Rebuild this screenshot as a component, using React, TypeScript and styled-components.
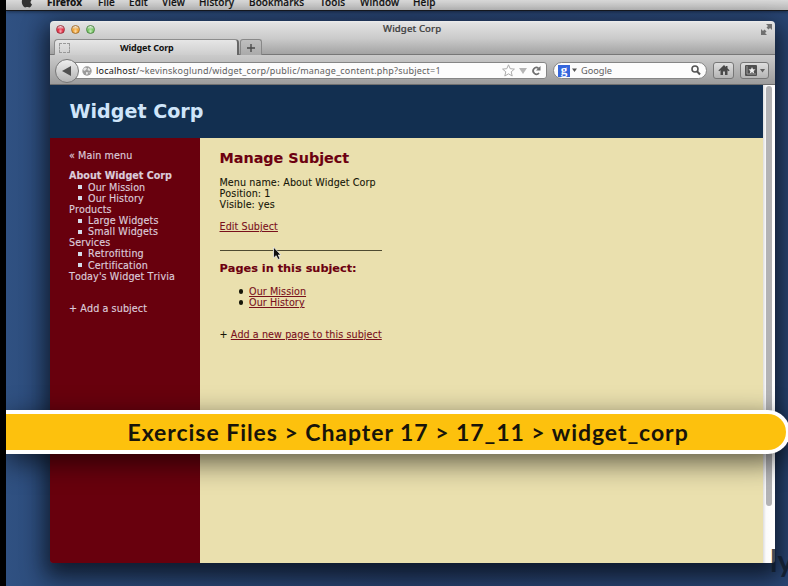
import React from "react";
import styled, { createGlobalStyle } from "styled-components";

const Global = createGlobalStyle`
  * { box-sizing: border-box; }
  html, body { margin: 0; padding: 0; overflow: hidden; background: #000; }
`;

const verdana = `"DejaVu Sans", Verdana, sans-serif`;
const lucida = `"Noto Sans", "Open Sans", sans-serif`;

const Screen = styled.div`
  position: relative;
  width: 788px;
  height: 586px;
  padding-left: 6px;
  overflow: hidden;
  background: #000;
`;

const Desktop = styled.div`
  width: 782px;
  height: 586px;
  overflow: hidden;
  background: linear-gradient(90deg, #305182 0, #2c4c7b 40px, #27416d 400px, #294674 100%);
`;

const MenuBar = styled.div`
  display: flex;
  height: 11px;
  padding-left: 14px;
  overflow: hidden;
  background: linear-gradient(#d9d9d9, #b9b9b9);
  border-bottom: 1px solid #16191f;
  box-shadow: 0 1px 3px rgba(0, 0, 0, 0.4);
`;

const AppleIcon = styled.svg`
  width: 14px;
  height: 8px;
  margin-right: 13px;
  flex: none;
`;

const MenuItem = styled.span<{ $w: number; $bold?: boolean }>`
  flex: none;
  width: ${(p) => p.$w}px;
  margin-top: -6px;
  font: ${(p) => (p.$bold ? 700 : 500)} 10px/16px ${lucida};
  letter-spacing: 0.1px;
  color: #111;
  -webkit-text-stroke: 0.2px #111;
  white-space: nowrap;
`;

const BrowserWindow = styled.div`
  width: 725px;
  height: 542px;
  margin: 10px 0 0 44px;
  overflow: hidden;
  border-radius: 4px 4px 3px 3px;
  box-shadow: 0 9px 22px 5px rgba(5, 10, 18, 0.72);
`;

const TitleBar = styled.div`
  display: grid;
  grid-template-columns: 1fr 58px 1fr;
  align-items: center;
  height: 18px;
  padding: 0 3px 2px 6px;
  background: linear-gradient(#ededed, #e2e2e2 2px, #cacaca);
`;

const Lights = styled.div`
  display: flex;
  gap: 6px;
`;

const Light = styled.span<{ $c: string; $edge: string }>`
  width: 9px;
  height: 9px;
  border-radius: 50%;
  border: 1px solid ${(p) => p.$edge};
  background: radial-gradient(ellipse at 50% 75%, #fff9 0, transparent 45%),
    linear-gradient(#fff8, ${(p) => p.$c} 50%);
`;

const WindowTitle = styled.span`
  margin-left: -2px;
  font: 500 9.6px/16px ${lucida};
  letter-spacing: 0.1px;
  color: #404040;
  -webkit-text-stroke: 0.2px #404040;
  white-space: nowrap;
`;

const ExpandIcon = styled.svg`
  width: 11px;
  height: 11px;
  justify-self: end;
`;

const TabStrip = styled.div`
  display: flex;
  height: 16px;
  padding-left: 4px;
  background: linear-gradient(#c9c9c9, #a3a3a3);
  border-bottom: 1px solid #777;
`;

const Tab = styled.div`
  display: flex;
  align-items: center;
  width: 185px;
  height: 16px;
  padding-left: 4px;
  border: 1px solid #8d8d8d;
  border-width: 1px 2px 0 1px;
  border-right-color: #666;
  border-radius: 4px 4px 0 0;
  background: linear-gradient(#e6e6e6, #cecece);
`;

const Placeholder = styled.span`
  width: 11px;
  height: 10px;
  border: 1px dashed #999;
`;

const TabLabel = styled.span`
  margin-left: 50px;
  font: 700 9px/14px ${lucida};
  letter-spacing: -0.17px;
  color: #111;
`;

const NewTab = styled.div`
  display: grid;
  place-items: center;
  width: 22px;
  height: 16px;
  margin-left: 1px;
  border: 1px solid #888;
  border-bottom: 0;
  border-radius: 3px 3px 0 0;
  background: linear-gradient(#bfbfbf, #aaa);
`;

const NavBar = styled.div`
  display: flex;
  align-items: center;
  height: 30px;
  padding: 2px 7px 0 5px;
  background: linear-gradient(#cbcbcb, #9c9c9c);
  border-bottom: 1px solid #6f6f6f;
`;

const BackButton = styled.div`
  z-index: 1;
  display: grid;
  place-items: center;
  flex: none;
  width: 24px;
  height: 24px;
  border: 1px solid #777;
  border-radius: 50%;
  background: linear-gradient(#eee, #b4b4b4);
`;

const UrlField = styled.div`
  display: flex;
  align-items: center;
  flex: none;
  width: 473px;
  height: 17px;
  margin-left: -5px;
  padding: 0 4px 0 7px;
  border: 1px solid #858585;
  border-radius: 0 3px 3px 0;
  background: #fcfcfc;
`;

const UrlText = styled.span`
  flex: 1;
  margin-left: 4px;
  font: 400 9px/14px ${lucida};
  letter-spacing: 0.205px;
  color: #606060;
  white-space: nowrap;
`;

const Host = styled.span`
  color: #111;
`;

const UrlIcons = styled.svg`
  width: 40px;
  height: 13px;
`;

const SearchField = styled.div`
  display: flex;
  align-items: center;
  flex: none;
  width: 154px;
  height: 17px;
  margin-left: 6px;
  padding: 0 5px 0 4px;
  border: 1px solid #858585;
  border-radius: 9px;
  background: #fcfcfc;
`;

const GoogleBadge = styled.span`
  width: 12px;
  height: 12px;
  background: #3566dc;
  color: #fff;
  font: 700 13px/9px "Liberation Serif", serif;
  text-align: center;
`;

const SearchText = styled.span`
  flex: 1;
  margin-left: 2px;
  font: 400 9.2px/14px ${lucida};
  color: #606060;
`;

const ToolButton = styled.div<{ $w: number }>`
  display: grid;
  place-items: center;
  flex: none;
  width: ${(p) => p.$w}px;
  height: 17px;
  margin-left: 6px;
  border: 1px solid #777;
  border-radius: 3px;
  background: linear-gradient(#dedede, #b4b4b4);
`;

const Viewport = styled.div`
  display: flex;
  height: 478px;
`;

const Page = styled.div`
  display: grid;
  grid-template: 53px 1fr / 150px 1fr;
  width: 713px;
  font-family: ${verdana};
  font-kerning: none;
`;

const PageHeader = styled.header`
  grid-column: 1 / -1;
  padding-left: 19.5px;
  background: #122f50;
  color: #cfe5fa;
  font-size: 19.1px;
  font-weight: 700;
  line-height: 53px;
`;

const Sidebar = styled.nav`
  padding: 12px 0 0 19px;
  background: #68000d;
  color: #dccbd9;
  font-size: 9.6px;
  line-height: 11.15px;
  letter-spacing: 0.1px;
  white-space: nowrap;
  -webkit-text-stroke: 0.15px #dccbd9;
`;

const NavLine = styled.div<{ $gap?: number; $bold?: boolean }>`
  height: 11.15px;
  margin-top: ${(p) => p.$gap ?? 0}px;
  font-weight: ${(p) => (p.$bold ? 700 : 400)};
  letter-spacing: ${(p) => (p.$bold ? 0 : 0.1)}px;
`;

const SubLine = styled.div`
  display: flex;
  align-items: center;
  gap: 6px;
  height: 11.15px;
  padding-left: 9px;

  &::before {
    content: "";
    width: 4px;
    height: 4px;
    background: #d5dcea;
  }
`;

const Main = styled.main`
  padding: 11px 0 0 19.5px;
  background: #eae0ae;
  color: #161608;
  font-size: 9.6px;
  line-height: 11.15px;
  letter-spacing: 0.08px;
  white-space: nowrap;
  -webkit-text-stroke: 0.1px;
`;

const Title = styled.h2`
  height: 18px;
  margin: 0;
  font-size: 14.35px;
  line-height: 18px;
  letter-spacing: 0;
  color: #6c0010;
`;

const Details = styled.div`
  margin-top: 10px;
`;

const Link = styled.a`
  color: #79101c;
  text-decoration: underline;
  text-decoration-thickness: 1px;
  text-underline-offset: 1px;
`;

const Action = styled.div<{ $gap: number }>`
  height: 11px;
  margin-top: ${(p) => p.$gap}px;
`;

const Rule = styled.hr`
  width: 162px;
  height: 1px;
  margin: 18px 0 0;
  border: 0;
  background: #4f4b31;
`;

const Subtitle = styled.h3`
  height: 14px;
  margin: 11px 0 0;
  font-size: 11.3px;
  line-height: 14px;
  letter-spacing: 0;
  color: #6c0010;
`;

const PageList = styled.ul`
  margin: 9.5px 0 0;
  padding: 0;
  list-style: none;
`;

const PageItem = styled.li`
  display: flex;
  align-items: center;
  gap: 6px;
  height: 11.15px;
  padding-left: 19px;

  &::before {
    content: "";
    width: 4.5px;
    height: 4.5px;
    border-radius: 50%;
    background: #161608;
  }
`;

const ScrollTrack = styled.div`
  width: 12px;
  padding: 1px 3px 0;
  background: linear-gradient(90deg, #ddd, #fbfbfb 3px, #fff);
`;

const ScrollThumb = styled.div`
  width: 6px;
  height: 420px;
  border-radius: 4px;
  background: #b3b3b5;
`;

const Banner = styled.div`
  position: absolute;
  left: 6px;
  top: 410px;
  width: 784px;
  height: 44px;
  padding-left: 121.5px;
  border: solid #fff;
  border-width: 4px 4px 4px 0;
  border-radius: 0 23px 23px 0;
  background: #fdc10d;
  box-shadow: 0 8px 28px rgba(0, 0, 0, 0.62);
  color: #17140a;
  font: 700 23px/37px Lato, sans-serif;
  letter-spacing: 0.95px;
  white-space: nowrap;
`;

const Watermark = styled.div`
  position: absolute;
  left: 770px;
  top: 542px;
  color: rgba(15, 25, 38, 0.8);
  font: 700 30px/36px Lato, sans-serif;
`;

const Pointer = styled.svg`
  position: absolute;
  left: 272px;
  top: 246px;
  width: 10px;
  height: 15px;
`;

const menus = [
  { label: "Firefox", w: 51, bold: true },
  { label: "File", w: 31 },
  { label: "Edit", w: 33 },
  { label: "View", w: 37 },
  { label: "History", w: 50 },
  { label: "Bookmarks", w: 71 },
  { label: "Tools", w: 40 },
  { label: "Window", w: 53 },
  { label: "Help", w: 40 },
];

const subjects = [
  { name: "About Widget Corp", current: true, pages: ["Our Mission", "Our History"] },
  { name: "Products", pages: ["Large Widgets", "Small Widgets"] },
  { name: "Services", pages: ["Retrofitting", "Certification"] },
  { name: "Today's Widget Trivia", pages: [] },
];

function Toolbar() {
  return (
    <NavBar>
      <BackButton>
        <svg width="12" height="12" viewBox="0 0 12 12">
          <path d="M1 6 10 1v10z" fill="#505050" />
        </svg>
      </BackButton>
      <UrlField>
        <svg width="10" height="10" viewBox="0 0 10 10">
          <circle cx="5" cy="5" r="4.7" fill="#9a9a9a" />
          <path d="M1 3 3 1.500l2 .5-1 2-2 1zM6 1.500l2.500 2-1 1.500-2-1zM4 6l2.500.5L5 9 4 8zM7.500 6.500l1-.5-.5 2z" fill="#e4e4e4" />
        </svg>
        <UrlText>
          <Host>localhost</Host>/~kevinskoglund/widget_corp/public/manage_content.php?subject=1
        </UrlText>
        <UrlIcons viewBox="0 0 40 13">
          <path d="m6.500.8 1.700 3.900 4.200.4-3.200 2.700 1 4.200-3.700-2.200-3.700 2.200 1-4.200L.6 5.100l4.200-.4z" fill="#fff" stroke="#aaa" strokeWidth="1" />
          <path d="M17 4h8l-4 6z" fill="#b5b5b5" />
          <path d="M36.500 4.300A3.300 3.300 0 1 0 37 9" fill="none" stroke="#707070" strokeWidth="1.700" />
          <path d="M38.500 2v4.500H34z" fill="#707070" />
        </UrlIcons>
      </UrlField>
      <SearchField>
        <GoogleBadge>g</GoogleBadge>
        <svg width="9" height="5" viewBox="0 0 9 5">
          <path d="M2 .5h5L4.500 4z" fill="#555" />
        </svg>
        <SearchText>Google</SearchText>
        <svg width="10" height="11" viewBox="0 0 10 11">
          <circle cx="4" cy="4" r="3" fill="none" stroke="#555" strokeWidth="1.600" />
          <path d="m6 6.300 3 3.200" stroke="#555" strokeWidth="2" />
        </svg>
      </SearchField>
      <ToolButton $w={21}>
        <svg width="12" height="11" viewBox="0 0 12 11">
          <path d="M6 0 .4 5.400l.8.800L2.500 5.200V10H5V6.500h2V10h2.500V5.200l1.300 1 .8-.8L9.500 3.300V1H8v1z" fill="#484848" />
        </svg>
      </ToolButton>
      <ToolButton $w={29}>
        <svg width="22" height="11" viewBox="0 0 22 11">
          <rect x="1" y="0" width="12" height="11" rx="1" fill="#505050" />
          <path d="M3 1v8h9" stroke="#999" fill="none" />
          <path d="m8 2 1 2.300 2.500.2-1.900 1.600.6 2.400L8 7.200 5.800 8.500l.6-2.400-1.900-1.600 2.500-.2z" fill="#eee" />
          <path d="M16 4h5l-2.500 3.500z" fill="#606060" />
        </svg>
      </ToolButton>
    </NavBar>
  );
}

export default function App() {
  return (
    <Screen>
      <Global />
      <Desktop>
        <MenuBar>
          <AppleIcon viewBox="0 0 14 8">
            <path d="M2 0h9.500C10 1.500 10.300 3.500 12 4.500 11 7 9.800 7.800 8.500 7.300c-1-.4-1.700-.4-2.700 0C4 8 1 4 2 0z" fill="#333" />
          </AppleIcon>
          {menus.map((m) => (
            <MenuItem key={m.label} $w={m.w} $bold={m.bold}>{m.label}</MenuItem>
          ))}
        </MenuBar>
        <BrowserWindow>
          <TitleBar>
            <Lights>
              <Light $c="#e8344a" $edge="#9c3440" />
              <Light $c="#f2a73a" $edge="#a5712f" />
              <Light $c="#7cc968" $edge="#4e8746" />
            </Lights>
            <WindowTitle>Widget Corp</WindowTitle>
            <ExpandIcon viewBox="0 0 11 11">
              <path d="M5 0h6v6L9 4 7.500 5.500 5.500 3.500 7 2zM0 5l2 2 1.500-1.500 2 2L4 9l2 2H0z" fill="#707070" />
            </ExpandIcon>
          </TitleBar>
          <TabStrip>
            <Tab>
              <Placeholder />
              <TabLabel>Widget Corp</TabLabel>
            </Tab>
            <NewTab>
              <svg width="8" height="8" viewBox="0 0 8 8">
                <path d="M4 0v8M0 4h8" stroke="#4a4a4a" strokeWidth="1.400" />
              </svg>
            </NewTab>
          </TabStrip>
          <Toolbar />
          <Viewport>
            <Page>
              <PageHeader>Widget Corp</PageHeader>
              <Sidebar>
                <NavLine>« Main menu</NavLine>
                {subjects.map((s) => (
                  <React.Fragment key={s.name}>
                    <NavLine $bold={s.current} $gap={s.current ? 9.3 : 0}>{s.name}</NavLine>
                    {s.pages.map((p) => (
                      <SubLine key={p}>{p}</SubLine>
                    ))}
                  </React.Fragment>
                ))}
                <NavLine $gap={21}>+ Add a subject</NavLine>
              </Sidebar>
              <Main>
                <Title>Manage Subject</Title>
                <Details>
                  Menu name: About Widget Corp<br />
                  Position: 1<br />
                  Visible: yes
                </Details>
                <Action $gap={11}><Link>Edit Subject</Link></Action>
                <Rule />
                <Subtitle>Pages in this subject:</Subtitle>
                <PageList>
                  <PageItem><Link>Our Mission</Link></PageItem>
                  <PageItem><Link>Our History</Link></PageItem>
                </PageList>
                <Action $gap={20.5}>+ <Link>Add a new page to this subject</Link></Action>
              </Main>
            </Page>
            <ScrollTrack>
              <ScrollThumb />
            </ScrollTrack>
          </Viewport>
        </BrowserWindow>
      </Desktop>
      <Pointer viewBox="0 0 10 15">
        <path d="M1.500 1v11l2.700-2.300L6 13.500l2-.9-1.700-3.600H9z" fill="#111" stroke="#eee" strokeWidth=".8" />
      </Pointer>
      <Watermark>ly</Watermark>
      <Banner>Exercise Files &gt; Chapter 17 &gt; 17_11 &gt; widget_corp</Banner>
    </Screen>
  );
}
